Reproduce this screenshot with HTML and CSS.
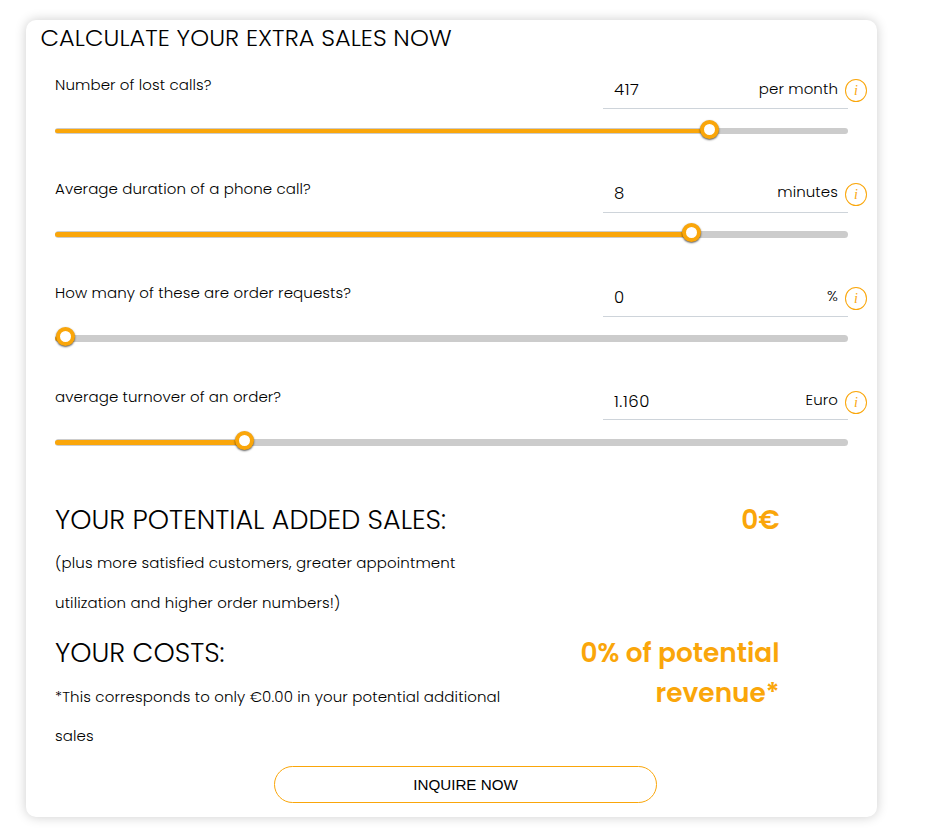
FILE: index.html
```
<!DOCTYPE html>
<html lang="en">
<head>
<meta charset="utf-8">
<title>Extra sales calculator</title>
<link rel="stylesheet" href="styles.css">
</head>
<body>
<main class="card">
  <h1 class="title">CALCULATE YOUR EXTRA SALES NOW</h1>
  <section class="row">
    <div class="fields"><span class="label">Number of lost calls?</span>
      <div class="field"><span class="value">417</span><span class="unit">per month</span></div><span class="info">i</span></div>
    <div class="track slim"><div class="fill" style="width:654.5px"></div><div class="thumb"></div></div>
  </section>
  <section class="row">
    <div class="fields"><span class="label">Average duration of a phone call?</span>
      <div class="field"><span class="value">8</span><span class="unit raised">minutes</span></div><span class="info">i</span></div>
    <div class="track"><div class="fill" style="width:636.5px"></div><div class="thumb"></div></div>
  </section>
  <section class="row">
    <div class="fields"><span class="label">How many of these are order requests?</span>
      <div class="field"><span class="value">0</span><span class="unit raised">%</span></div><span class="info">i</span></div>
    <div class="track"><div class="fill" style="width:10px"></div><div class="thumb"></div></div>
  </section>
  <section class="row">
    <div class="fields short"><span class="label">average turnover of an order?</span>
      <div class="field"><span class="value">1.160</span><span class="unit raised">Euro</span></div><span class="info">i</span></div>
    <div class="track"><div class="fill" style="width:189.5px"></div><div class="thumb"></div></div>
  </section>
  <section class="result sales">
    <div class="detail"><h2 class="heading">YOUR POTENTIAL ADDED SALES:</h2>
      <p class="note">(plus more satisfied customers, greater appointment<br>utilization and higher order numbers!)</p></div>
    <div class="amount">0€</div>
  </section>
  <section class="result costs">
    <div class="detail"><h2 class="heading">YOUR COSTS:</h2>
      <p class="note">*This corresponds to only €0.00 in your potential additional<br>sales</p></div>
    <div class="amount">0% of potential<br>revenue*</div>
  </section>
  <button class="inquire">INQUIRE NOW</button>
</main>
</body>
</html>
```
FILE: styles.css
```
* { box-sizing: border-box; }
body { margin: 0; min-height: 834px; display: flow-root; background: #fff; color: #000; font-family: Poppins, Inter, "Liberation Sans", sans-serif; font-weight: 300; }
.card { width: 851px; height: 797px; margin: 20px 0 0 26px; border-radius: 10px; background: #fff; box-shadow: 0 0 12px rgba(0,0,0,.2); display: flex; flex-direction: column; }
.title { margin: 0 0 11px 14.5px; font-size: 24px; line-height: 36px; font-weight: 300; letter-spacing: .06px; white-space: nowrap; }
.row { height: 104px; flex: none; padding-left: 29px; }
.fields { display: flex; height: 42px; }
.fields.short { height: 41px; margin-bottom: 19px; }
.label { width: 548px; font-size: 15px; line-height: 36px; letter-spacing: .1px; white-space: nowrap; flex: none; }
.field { width: 245px; flex: none; display: flex; justify-content: space-between; border-bottom: 1px solid #ced4da; padding: 0 10px 0 11px; }
.value { font-size: 16.5px; line-height: 45px; letter-spacing: .55px; }
.unit { font-size: 15px; line-height: 43px; letter-spacing: .1px; }
.unit.raised { line-height: 41px; }
.info { width: 22px; height: 23px; margin: 12px 0 0 -3px; border: 1px solid #faa60a; border-radius: 50%; color: #faa60a; font: italic 14px/22px "Liberation Serif", serif; text-align: center; }
.track { width: 793px; height: 7px; margin-top: 18px; background: #ccc; border-radius: 4px; display: flex; align-items: center; }
.track.slim { height: 6px; margin-top: 19px; }
.fill { height: 5px; flex: none; background: #faa60a; border-radius: 3px; }
.slim .fill { height: 4px; }
.thumb { width: 19px; height: 19px; flex: none; margin: -4px 0 0 -9.5px; border: 4.5px solid #faa60a; border-radius: 50%; background: #fff; box-shadow: 0 1px 2px rgba(0,0,0,.65); }
.result { display: flex; padding-left: 29px; flex: none; }
.sales { height: 133px; margin-top: 17px; }
.detail { width: 483px; }
.amount { width: 241.5px; text-align: right; color: #faa60a; font-size: 26.4px; line-height: 40px; font-weight: 600; white-space: nowrap; }
.heading { margin: 0; font-size: 27px; line-height: 40px; font-weight: 300; white-space: nowrap; }
.note { margin: 3px 0 0; font-size: 15px; line-height: 39.5px; letter-spacing: .13px; white-space: nowrap; }
.costs { height: 133px; }
.costs .note { margin-top: 4px; line-height: 39px; }
.inquire { width: 383px; height: 37px; flex: none; margin: 0 0 0 248px; border: 1px solid #faa60a; border-radius: 19px; background: #fff; color: #000; font: 15.2px "Liberation Sans", sans-serif; }
```
